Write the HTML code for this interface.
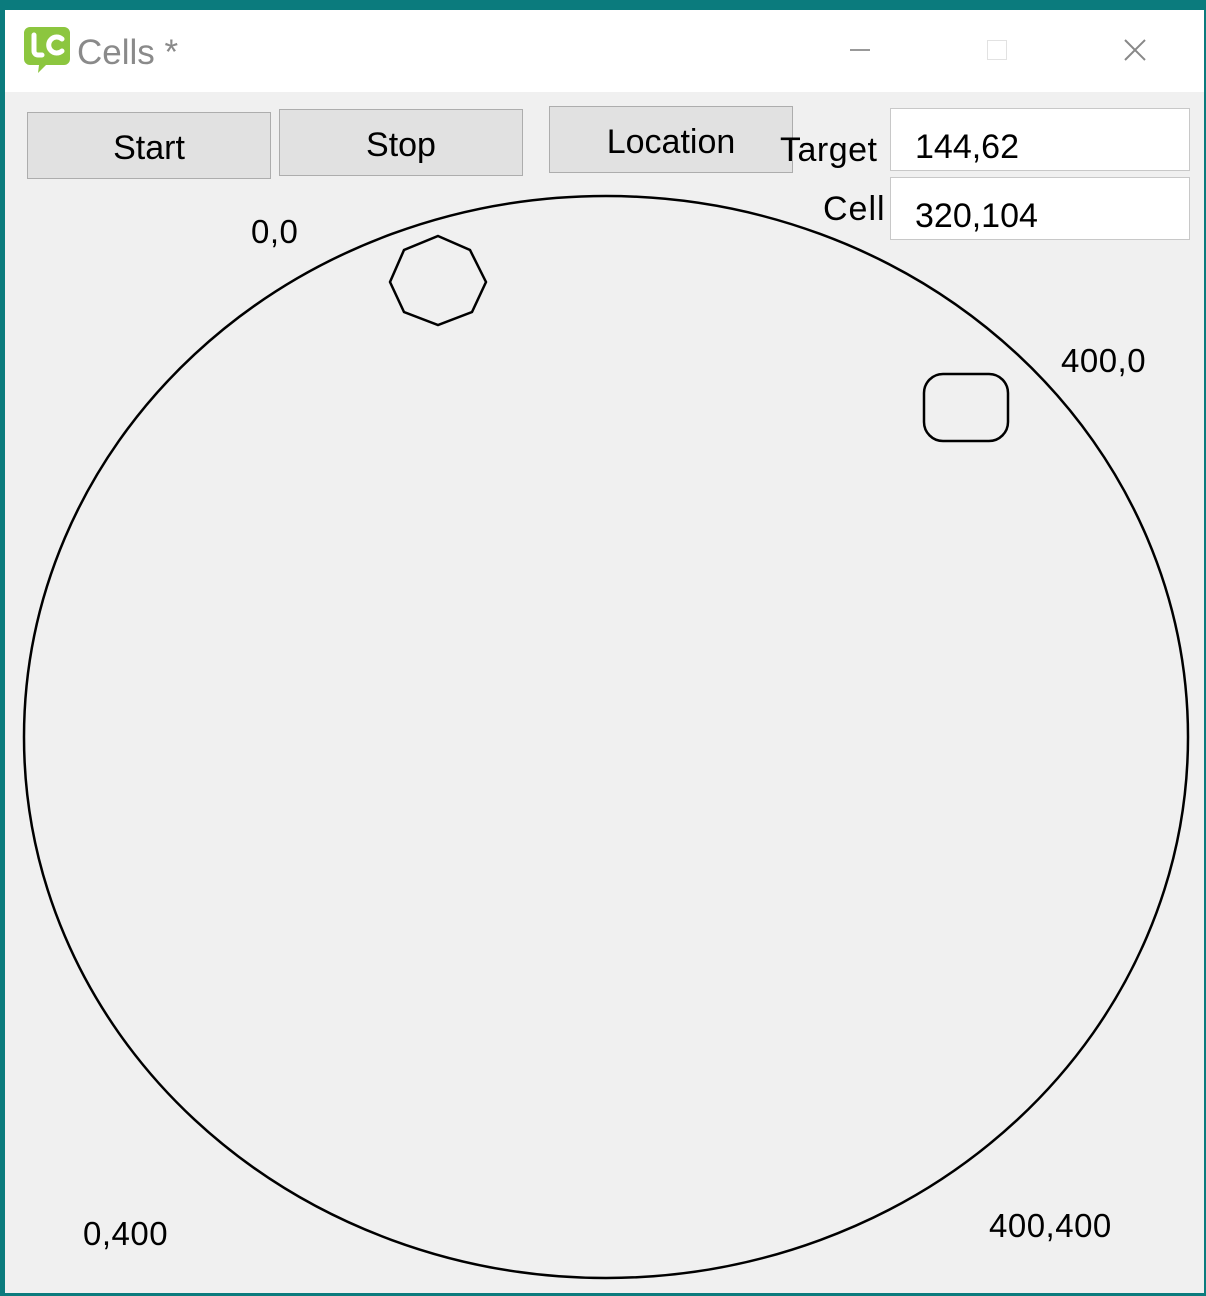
<!DOCTYPE html>
<html><head><style>
body{margin:0;width:1206px;height:1296px;background:#0b7b7d;position:relative;overflow:hidden;font-family:"Liberation Sans",sans-serif}
.win{position:absolute;left:5px;top:10px;width:1199px;height:1283px;background:#f0f0f0}
.title{position:absolute;left:0;top:0;width:1199px;height:82px;background:#fff}
.btn{position:absolute;background:#e1e1e1;border:1px solid #adadad;box-sizing:border-box;font-size:34px;color:#000;display:flex;align-items:center;justify-content:center}
.box{position:absolute;background:#fff;border:1px solid #c8c8c8;box-sizing:border-box;font-size:34px;padding-left:24px;display:flex;align-items:center;padding-top:16px}
.lbl{position:absolute;font-size:34px;color:#000}
</style></head><body>
<div class="win">
<div class="title">
<svg style="position:absolute;left:19px;top:15px" width="48" height="50" viewBox="0 0 48 50">
<path d="M6 2h34a6 6 0 0 1 6 6v26a6 6 0 0 1-6 6H22l-8 8 1-8H6a6 6 0 0 1-6-6V8a6 6 0 0 1 6-6z" fill="#8cc63f"/>
<path d="M10 10v16a4 4 0 0 0 4 4h4" stroke="#fff" stroke-width="5" fill="none" stroke-linecap="round"/>
<path d="M38 14a8 8 0 1 0 0 12" stroke="#fff" stroke-width="5" fill="none" stroke-linecap="round"/>
</svg>
<div style="position:absolute;left:72px;top:23px;font-size:35px;color:#8a8a8a">Cells *</div>
<div style="position:absolute;left:845px;top:39px;width:20px;height:2px;background:#999"></div>
<div style="position:absolute;left:982px;top:30px;width:18px;height:18px;border:1px solid #e2e2e2"></div>
<svg style="position:absolute;left:1119px;top:29px" width="22" height="22"><path d="M1 1L21 21M21 1L1 21" stroke="#888" stroke-width="2"/></svg>
</div>
</div>
<div class="btn" style="left:27px;top:112px;width:244px;height:67px;padding-top:6px">Start</div>
<div class="btn" style="left:279px;top:109px;width:244px;height:67px;padding-top:6px">Stop</div>
<div class="btn" style="left:549px;top:106px;width:244px;height:67px;padding-top:5px">Location</div>
<div class="lbl" style="left:780px;top:131px;letter-spacing:0.5px">Target</div>
<div class="lbl" style="left:823px;top:190px;letter-spacing:1px">Cell</div>
<div class="box" style="left:890px;top:108px;width:300px;height:63px">144,62</div>
<div class="box" style="left:890px;top:177px;width:300px;height:63px">320,104</div>
<svg style="position:absolute;left:0;top:0" width="1206" height="1296">
<ellipse cx="606" cy="737" rx="582" ry="541" fill="none" stroke="#000" stroke-width="2.5"/>
<polygon points="438,236 470,250 486,282 472,312 438,325 404,312 390,282 404,250" fill="none" stroke="#000" stroke-width="2.5"/>
<rect x="924" y="374" width="84" height="67" rx="19" fill="none" stroke="#000" stroke-width="2.5"/>
</svg>
<div class="lbl" style="left:251px;top:213px;font-size:33px;letter-spacing:0.5px">0,0</div>
<div class="lbl" style="left:1061px;top:342px;font-size:33px;letter-spacing:0.5px">400,0</div>
<div class="lbl" style="left:83px;top:1215px;font-size:33px;letter-spacing:0.5px">0,400</div>
<div class="lbl" style="left:989px;top:1207px;font-size:33px;letter-spacing:0.5px">400,400</div>
</body></html>
